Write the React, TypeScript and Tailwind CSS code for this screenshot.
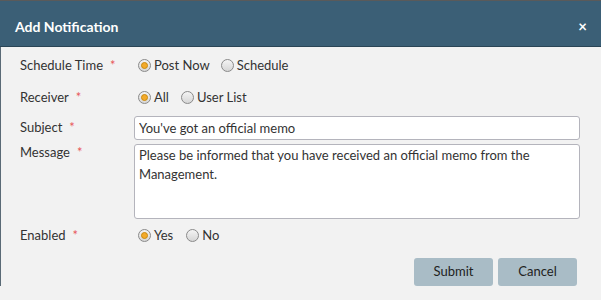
import { useState } from 'react';

const FONT = { fontFamily: 'Lato, "Noto Sans", sans-serif' };

function Radio({ checked, label, onClick }: { checked: boolean; label: string; onClick: () => void }) {
  return (
    <button type="button" onClick={onClick} className="flex items-center gap-[3px] text-[13px] text-[#333]">
      <span className="flex h-[13px] w-[13px] items-center justify-center rounded-full border border-[#8a8a8a] bg-gradient-to-b from-[#f4f4f4] to-[#d6d6d6]">
        {checked && <span className="h-[7px] w-[7px] rounded-full border border-[#c98a10] bg-[#f3aa2a]" />}
      </span>
      <span>{label}</span>
    </button>
  );
}

function Label({ text, className = '' }: { text: string; className?: string }) {
  return (
    <div className={`w-[114px] text-[13px] text-[#333] ${className}`}>
      {text}
      <span className="ml-[7px] text-[#e8585a]">*</span>
    </div>
  );
}

export default function App() {
  const [schedule, setSchedule] = useState('now');
  const [receiver, setReceiver] = useState('all');
  const [enabled, setEnabled] = useState('yes');

  return (
    <div className="h-[300px] w-[601px] overflow-hidden border-t border-[#5a5a5a] bg-[#f2f2f2]" style={FONT}>
      <div className="flex h-[46px] items-center justify-between border-b border-[#2a4556] bg-[#3b5f76] pl-[15px] pr-[14px] pt-[5px]">
        <h2 className="text-[14px] font-bold text-white">Add Notification</h2>
        <span className="text-[15px] font-bold leading-none text-white">×</span>
      </div>

      <div className="border-l border-[#5a6a76] pl-[19px] pr-[21px]">
        <div className="flex h-[37px] items-center">
          <Label text="Schedule Time" />
          <div className="flex items-center gap-[11px] pl-[4px]">
            <Radio checked={schedule === 'now'} label="Post Now" onClick={() => setSchedule('now')} />
            <Radio checked={schedule === 'later'} label="Schedule" onClick={() => setSchedule('later')} />
          </div>
        </div>

        <div className="flex h-[27px] items-center">
          <Label text="Receiver" />
          <div className="flex items-center gap-[12px] pl-[4px]">
            <Radio checked={receiver === 'all'} label="All" onClick={() => setReceiver('all')} />
            <Radio checked={receiver === 'list'} label="User List" onClick={() => setReceiver('list')} />
          </div>
        </div>

        <div className="mt-[5px] flex items-center">
          <Label text="Subject" />
          <input
            defaultValue="You've got an official memo"
            className="h-[24px] flex-1 rounded-[3px] border border-[#b4b4bc] bg-white px-[4px] text-[13px] text-[#333] outline-none"
            style={FONT}
          />
        </div>

        <div className="mt-[4px] flex items-start">
          <Label text="Message" className="-mt-[1px]" />
          <textarea
            defaultValue="Please be informed that you have received an official memo from the Management."
            className="h-[75px] flex-1 resize-none rounded-[3px] border border-[#b4b4bc] bg-white px-[4px] py-[1px] text-[13px] leading-[19px] text-[#333] outline-none"
            style={FONT}
          />
        </div>

        <div className="mt-[7px] flex items-center">
          <Label text="Enabled" />
          <div className="flex items-center gap-[13px] pl-[4px]">
            <Radio checked={enabled === 'yes'} label="Yes" onClick={() => setEnabled('yes')} />
            <Radio checked={enabled === 'no'} label="No" onClick={() => setEnabled('no')} />
          </div>
        </div>

        <div className="mt-[12px] flex justify-end gap-[5px] pr-[3px]">
          <button className="h-[28px] w-[79px] rounded-[3px] bg-[#a9bcc6] text-[13px] text-[#222]">Submit</button>
          <button className="h-[28px] w-[79px] rounded-[3px] bg-[#a9bcc6] text-[13px] text-[#222]">Cancel</button>
        </div>
      </div>
    </div>
  );
}
